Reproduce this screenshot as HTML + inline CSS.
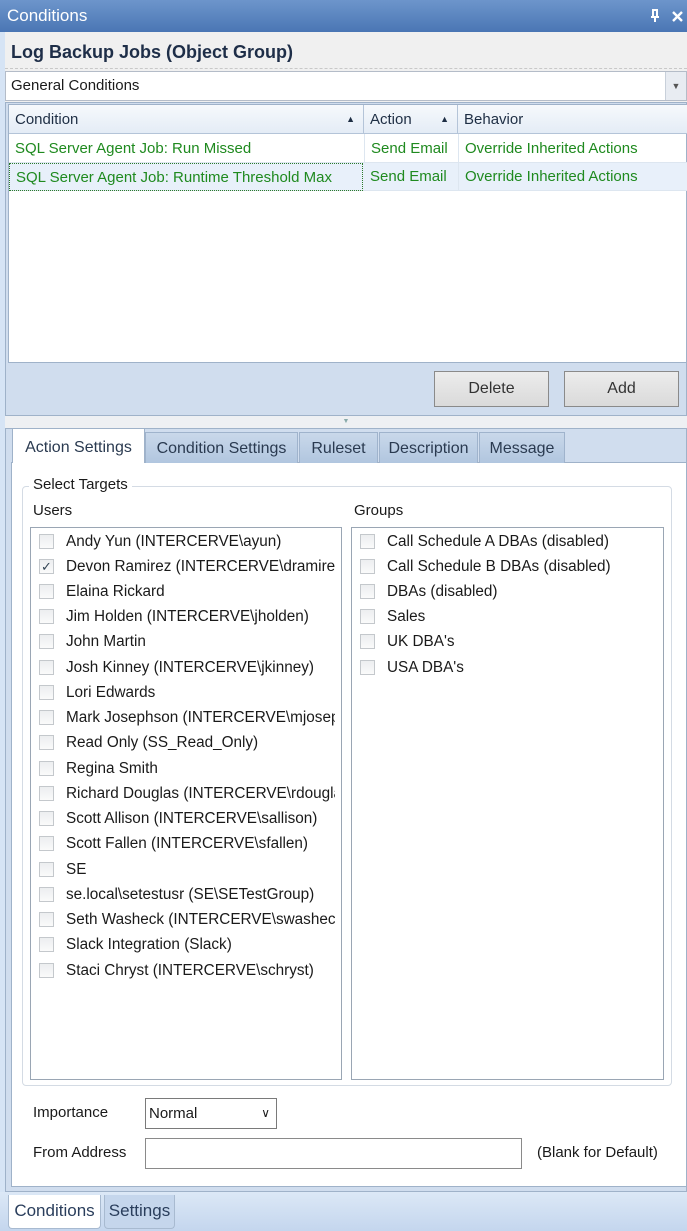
<!DOCTYPE html>
<html><head><meta charset="utf-8"><style>
*{box-sizing:border-box;margin:0;padding:0}
body{width:687px;height:1231px;overflow:hidden;background:#dce7f5;font-family:"Liberation Sans",sans-serif;font-size:15px;color:#1a1a1a;position:relative}
.a{position:absolute}
.title{left:0;top:0;width:687px;height:32px;background:linear-gradient(#6d95cb,#4a76b4);color:#fff;font-size:17px;line-height:32px;padding-left:7px}
.chk{position:absolute;left:8px;width:15px;height:15px;border:1px solid #c4c8cc;background:linear-gradient(#eceef0,#fafafa)}
.row{position:absolute;left:0;height:25px;line-height:25px;padding-left:35px;white-space:nowrap;font-size:15.3px}
.g{color:#1f8a1f}
.th{position:absolute;top:0;height:29px;line-height:29px;padding-left:6px;border-right:1px solid #b4c4d8;color:#1e2e44}
.btn{position:absolute;height:36px;border:1px solid #8a8a8a;background:linear-gradient(#ececec,#dadada);text-align:center;line-height:34px;color:#333;font-size:16px}
.tab{position:absolute;top:432px;height:31px;line-height:31px;text-align:center;background:linear-gradient(#c9d8ea,#b1c6df);border:1px solid #9fb3cc;border-bottom:none;color:#2a3a50;font-size:16px}
</style></head><body>
<div class="a title">Conditions
<svg style="position:absolute;right:27px;top:9px" width="10" height="14" viewBox="0 0 10 14"><path d="M2 1H8M3 1V8M7 1V8M1 8H9M5 8V13" stroke="#fff" stroke-width="2" fill="none"/></svg>
<svg style="position:absolute;right:4px;top:11px" width="11" height="11" viewBox="0 0 11 11"><path d="M1 1L10 10M10 1L1 10" stroke="#fff" stroke-width="2.4"/></svg></div>
<div class="a" style="left:0;top:32px;width:5px;height:1160px;background:#d6e4f5"></div>
<div class="a" style="left:5px;top:32px;width:682px;height:70px;background:#f0f0f0"></div>
<div class="a" style="left:11px;top:42px;font-size:18px;font-weight:bold;color:#1e2e48">Log Backup Jobs (Object Group)</div>
<div class="a" style="left:5px;top:68px;width:682px;border-top:1px dashed #c8c8c8"></div>
<div class="a" style="left:5px;top:71px;width:682px;height:30px;background:#fff;border:1px solid #b4bcc8;line-height:28px;padding-left:5px;font-size:15px">General Conditions
<div style="position:absolute;right:0;top:0;width:21px;height:28px;background:#e8ecf2;border-left:1px solid #c8d0da;font-size:9px;text-align:center;line-height:28px;color:#555">▼</div></div>
<div class="a" style="left:5px;top:102px;width:682px;height:314px;background:#d0ddee;border:1px solid #9fb2c9"></div>
<div class="a" style="left:8px;top:104px;width:679px;height:259px;background:#fff;border:1px solid #9fb2c9">
 <div style="position:absolute;left:0;top:0;width:679px;height:29px;background:linear-gradient(#f6f9fc,#e4ecf6);border-bottom:1px solid #b4c4d8"></div>
 <div class="th" style="left:0;width:355px">Condition<span style="position:absolute;right:8px;font-size:9px">▲</span></div>
 <div class="th" style="left:355px;width:94px">Action<span style="position:absolute;right:8px;font-size:9px">▲</span></div>
 <div class="th" style="left:449px;width:230px;border:none">Behavior</div>
 <div style="position:absolute;left:0;top:29px;width:679px;height:29px;border-bottom:1px solid #dde6f0;line-height:29px" class="g"><span style="position:absolute;left:6px">SQL Server Agent Job: Run Missed</span><span style="position:absolute;left:355px;border-left:1px solid #dde6f0;padding-left:6px;height:29px">Send Email</span><span style="position:absolute;left:449px;border-left:1px solid #dde6f0;padding-left:6px;height:29px">Override Inherited Actions</span></div>
 <div style="position:absolute;left:0;top:58px;width:679px;height:28px;background:#e8f0fa;border-bottom:1px solid #dde6f0;line-height:28px" class="g"><span style="position:absolute;left:0;width:354px;height:28px;border:1px dotted #2a7a2a;padding-left:6px">SQL Server Agent Job: Runtime Threshold Max</span><span style="position:absolute;left:355px;padding-left:6px">Send Email</span><span style="position:absolute;left:449px;border-left:1px solid #dde6f0;padding-left:6px;height:28px">Override Inherited Actions</span></div>
</div>
<div class="btn" style="left:434px;top:371px;width:115px">Delete</div>
<div class="btn" style="left:564px;top:371px;width:115px">Add</div>
<div class="a" style="left:5px;top:416px;width:682px;height:12px;background:#eef0f3;font-size:7px;text-align:center;color:#8aa;line-height:12px">▼</div>
<div class="a" style="left:5px;top:428px;width:682px;height:764px;background:#d0ddee;border:1px solid #9fb2c9"></div>
<div class="a" style="left:11px;top:462px;width:676px;height:725px;background:#fff;border:1px solid #9fb2c9"></div>
<div class="tab" style="left:145px;width:153px">Condition Settings</div>
<div class="tab" style="left:299px;width:79px">Ruleset</div>
<div class="tab" style="left:379px;width:99px">Description</div>
<div class="tab" style="left:479px;width:86px">Message</div>
<div class="tab" style="left:12px;top:428px;height:35px;width:133px;background:#fff;line-height:37px;border-color:#9fb2c9">Action Settings</div>
<div class="a" style="left:22px;top:486px;width:650px;height:600px;border:1px solid #d4dbe4;border-radius:4px"></div>
<div class="a" style="left:29px;top:476px;background:#fff;padding:0 4px">Select Targets</div>
<div class="a" style="left:33px;top:502px">Users</div>
<div class="a" style="left:354px;top:502px">Groups</div>
<div class="a" style="left:30px;top:527px;width:312px;height:553px;border:1px solid #9aa6b4"><div style="position:absolute;left:0;top:0;width:304px;height:551px;overflow:hidden">
<div class="row" style="top:1px">Andy Yun (INTERCERVE\ayun)</div>
<div class="row" style="top:26px">Devon Ramirez (INTERCERVE\dramirez)</div>
<div class="row" style="top:51px">Elaina Rickard</div>
<div class="row" style="top:76px">Jim Holden (INTERCERVE\jholden)</div>
<div class="row" style="top:101px">John Martin</div>
<div class="row" style="top:127px">Josh Kinney (INTERCERVE\jkinney)</div>
<div class="row" style="top:152px">Lori Edwards</div>
<div class="row" style="top:177px">Mark Josephson (INTERCERVE\mjosephson)</div>
<div class="row" style="top:202px">Read Only (SS_Read_Only)</div>
<div class="row" style="top:228px">Regina Smith</div>
<div class="row" style="top:253px">Richard Douglas (INTERCERVE\rdouglas)</div>
<div class="row" style="top:278px">Scott Allison (INTERCERVE\sallison)</div>
<div class="row" style="top:303px">Scott Fallen (INTERCERVE\sfallen)</div>
<div class="row" style="top:329px">SE</div>
<div class="row" style="top:354px">se.local\setestusr (SE\SETestGroup)</div>
<div class="row" style="top:379px">Seth Washeck (INTERCERVE\swasheck)</div>
<div class="row" style="top:404px">Slack Integration (Slack)</div>
<div class="row" style="top:430px">Staci Chryst (INTERCERVE\schryst)</div>
<div class="chk" style="top:6px"></div><div class="chk" style="top:31px;color:#345;font-size:13px;line-height:13px;text-align:center">✓</div>
<div class="chk" style="top:56px"></div><div class="chk" style="top:81px"></div><div class="chk" style="top:106px"></div><div class="chk" style="top:132px"></div><div class="chk" style="top:157px"></div><div class="chk" style="top:182px"></div><div class="chk" style="top:207px"></div><div class="chk" style="top:233px"></div><div class="chk" style="top:258px"></div><div class="chk" style="top:283px"></div><div class="chk" style="top:308px"></div><div class="chk" style="top:334px"></div><div class="chk" style="top:359px"></div><div class="chk" style="top:384px"></div><div class="chk" style="top:409px"></div><div class="chk" style="top:435px"></div>
</div></div>
<div class="a" style="left:351px;top:527px;width:313px;height:553px;border:1px solid #9aa6b4">
<div class="row" style="top:1px">Call Schedule A DBAs (disabled)</div>
<div class="row" style="top:26px">Call Schedule B DBAs (disabled)</div>
<div class="row" style="top:51px">DBAs (disabled)</div>
<div class="row" style="top:76px">Sales</div>
<div class="row" style="top:101px">UK DBA's</div>
<div class="row" style="top:127px">USA DBA's</div>
<div class="chk" style="top:6px"></div><div class="chk" style="top:31px"></div><div class="chk" style="top:56px"></div><div class="chk" style="top:81px"></div><div class="chk" style="top:106px"></div><div class="chk" style="top:132px"></div>
</div>
<div class="a" style="left:33px;top:1104px">Importance</div>
<div class="a" style="left:145px;top:1098px;width:132px;height:31px;border:1px solid #7a7a7a;line-height:29px;padding-left:3px">Normal<span style="position:absolute;right:6px;font-size:12px">&#8744;</span></div>
<div class="a" style="left:33px;top:1144px">From Address</div>
<div class="a" style="left:145px;top:1138px;width:377px;height:31px;border:1px solid #8a8a8a"></div>
<div class="a" style="left:537px;top:1144px">(Blank for Default)</div>
<div class="a" style="left:0;top:1192px;width:687px;height:39px;background:linear-gradient(#dce8f6,#c4d6ee)"></div>
<div class="a" style="left:8px;top:1195px;width:93px;height:34px;background:#fff;border:1px solid #a8bad0;border-top:none;line-height:32px;text-align:center;font-size:17px;color:#2a3e5c;border-radius:0 0 4px 4px">Conditions</div>
<div class="a" style="left:104px;top:1195px;width:71px;height:34px;background:#c5d6ec;border:1px solid #a8bad0;border-top:none;line-height:32px;text-align:center;font-size:17px;color:#2a3e5c;border-radius:0 0 4px 4px">Settings</div>
</body></html>
